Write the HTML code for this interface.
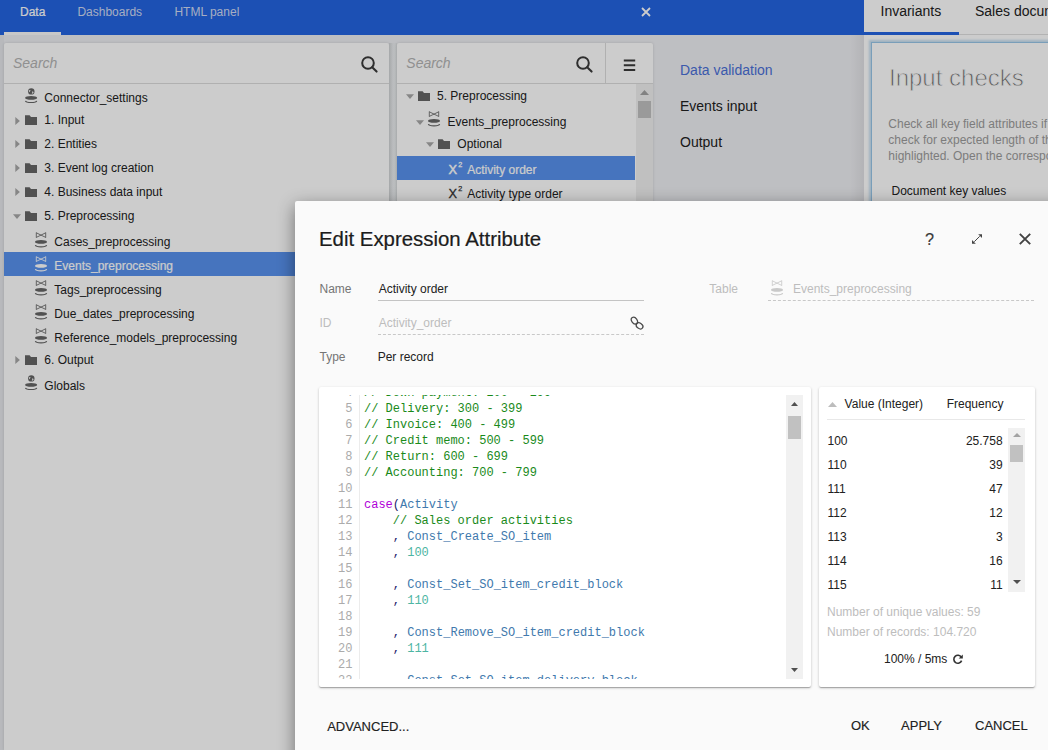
<!DOCTYPE html>
<html><head><meta charset="utf-8">
<style>
*{box-sizing:border-box;margin:0;padding:0}
html,body{width:1048px;height:750px;overflow:hidden}
body{position:relative;background:#eeeff3;font-family:"Liberation Sans",sans-serif;color:#212121;font-size:12px}
.a{position:absolute}
.t{position:absolute;white-space:pre}
svg{position:absolute;overflow:visible}
.code{font-family:"Liberation Mono",monospace;font-size:12px;line-height:16px;white-space:pre}
</style></head><body>

<div class="a" style="left:0px;top:0px;width:864px;height:35px;background:#2464e1;"></div>
<div class="t" style="left:20px;top:-0.17px;line-height:24px;height:24px;font-size:12px;color:#ffffff;-webkit-text-stroke:0.2px #fff">Data</div>
<div class="t" style="left:77.4px;top:-0.17px;line-height:24px;height:24px;font-size:12px;color:#d0daf3;">Dashboards</div>
<div class="t" style="left:174.4px;top:-0.17px;line-height:24px;height:24px;font-size:12px;color:#d0daf3;">HTML panel</div>
<div class="a" style="left:4px;top:32px;width:57px;height:3px;background:#fafafa;"></div>
<svg style="left:641px;top:7px" width="10" height="10" viewBox="0 0 10 10"><path d="M1 1L9 9M9 1L1 9" stroke="#fff" stroke-width="1.8"/></svg>
<div class="a" style="left:0px;top:35px;width:4px;height:715px;background:#e6e8ec;"></div>
<div class="a" style="left:4px;top:43px;width:385px;height:707px;background:#fff;border-radius:2px 2px 0 0;box-shadow:0 0 3px rgba(0,0,0,0.14)"></div>
<div class="a" style="left:389px;top:43px;width:8px;height:707px;background:linear-gradient(90deg,#d0d2d4 0px,#dcdfe1 2px,#e9ecee 4px,#eaedef 6px,#e0e3e5 8px);"></div>
<div class="a" style="left:4px;top:83px;width:385px;height:1px;background:#dcdcdc;"></div>
<div class="t" style="left:13px;top:51.09px;line-height:24px;height:24px;font-size:14px;color:#b4b4b4;font-style:italic">Search</div>
<svg style="left:361px;top:56px" width="17" height="17" viewBox="0 0 17 17"><circle cx="7" cy="7" r="5.8" stroke="#3a3a3a" stroke-width="2" fill="none"/><path d="M11.2 11.2L15.6 15.6" stroke="#3a3a3a" stroke-width="2.1" stroke-linecap="round"/></svg>
<div class="a" style="left:4px;top:252px;width:385px;height:24px;background:#5892ee;"></div>
<svg style="left:24.8px;top:87.6px" width="13" height="15" viewBox="0 0 13 15"><circle cx="6.3" cy="3.4" r="3.2" fill="#666666"/><path d="M4.2 2.2Q5.2 1.6 5.6 2.6Q5 3.6 4 4.2Q3.9 3 4.2 2.2ZM7.2 3.2Q8.6 3.4 8.6 4.4Q7.8 5.6 6.8 5.8Q7.4 4.6 7.2 3.2Z" fill="#fff"/><ellipse cx="6.1" cy="9.9" rx="6" ry="1.9" fill="#666666"/><path d="M0.5 12.8Q0.9 14.5 6.1 14.5Q11.3 14.5 11.7 12.8" stroke="#666666" stroke-width="1.2" fill="none"/></svg>
<div class="t" style="left:44.3px;top:85.93px;line-height:24px;height:24px;font-size:12px;color:#212121;">Connector_settings</div>
<svg style="left:14.5px;top:116.7px" width="5" height="8" viewBox="0 0 5 8"><path d="M0.3 0L4.9 4L0.3 8Z" fill="#a8a8a8"/></svg>
<svg style="left:25px;top:115.30000000000001px" width="12" height="10" viewBox="0 0 12 10"><path d="M0 0.3H4.6L6 2H12V10H0Z" fill="#666666"/></svg>
<div class="t" style="left:44.3px;top:108.23px;line-height:24px;height:24px;font-size:12px;color:#212121;">1. Input</div>
<svg style="left:14.5px;top:140.3px" width="5" height="8" viewBox="0 0 5 8"><path d="M0.3 0L4.9 4L0.3 8Z" fill="#a8a8a8"/></svg>
<svg style="left:25px;top:138.9px" width="12" height="10" viewBox="0 0 12 10"><path d="M0 0.3H4.6L6 2H12V10H0Z" fill="#666666"/></svg>
<div class="t" style="left:44.3px;top:131.83px;line-height:24px;height:24px;font-size:12px;color:#212121;">2. Entities</div>
<svg style="left:14.5px;top:164.20000000000002px" width="5" height="8" viewBox="0 0 5 8"><path d="M0.3 0L4.9 4L0.3 8Z" fill="#a8a8a8"/></svg>
<svg style="left:25px;top:162.8px" width="12" height="10" viewBox="0 0 12 10"><path d="M0 0.3H4.6L6 2H12V10H0Z" fill="#666666"/></svg>
<div class="t" style="left:44.3px;top:155.73px;line-height:24px;height:24px;font-size:12px;color:#212121;">3. Event log creation</div>
<svg style="left:14.5px;top:188.3px" width="5" height="8" viewBox="0 0 5 8"><path d="M0.3 0L4.9 4L0.3 8Z" fill="#a8a8a8"/></svg>
<svg style="left:25px;top:186.9px" width="12" height="10" viewBox="0 0 12 10"><path d="M0 0.3H4.6L6 2H12V10H0Z" fill="#666666"/></svg>
<div class="t" style="left:44.3px;top:179.83px;line-height:24px;height:24px;font-size:12px;color:#212121;">4. Business data input</div>
<svg style="left:12.8px;top:213.9px" width="8" height="5" viewBox="0 0 8 5"><path d="M0 0.3H8L4 5Z" fill="#a8a8a8"/></svg>
<svg style="left:25px;top:210.8px" width="12" height="10" viewBox="0 0 12 10"><path d="M0 0.3H4.6L6 2H12V10H0Z" fill="#666666"/></svg>
<div class="t" style="left:44.3px;top:203.73px;line-height:24px;height:24px;font-size:12px;color:#212121;">5. Preprocessing</div>
<svg style="left:35px;top:232.0px" width="12" height="15" viewBox="0 0 12 15"><path d="M1.3 0.5V5.7M10.7 0.5V5.7M1.3 0.8L10.7 5.4M1.3 5.4L10.7 0.8" stroke="#666666" stroke-width="0.85" fill="none"/><ellipse cx="6" cy="9.9" rx="6" ry="1.9" fill="#666666"/><path d="M0.4 13.2Q0.8 14.9 6 14.9Q11.2 14.9 11.6 13.2" stroke="#666666" stroke-width="1.2" fill="none"/></svg>
<div class="t" style="left:54.3px;top:229.63px;line-height:24px;height:24px;font-size:12px;color:#212121;">Cases_preprocessing</div>
<svg style="left:35px;top:256.0px" width="12" height="15" viewBox="0 0 12 15"><path d="M1.3 0.5V5.7M10.7 0.5V5.7M1.3 0.8L10.7 5.4M1.3 5.4L10.7 0.8" stroke="#ffffff" stroke-width="0.85" fill="none"/><ellipse cx="6" cy="9.9" rx="6" ry="1.9" fill="#ffffff"/><path d="M0.4 13.2Q0.8 14.9 6 14.9Q11.2 14.9 11.6 13.2" stroke="#ffffff" stroke-width="1.2" fill="none"/></svg>
<div class="t" style="left:54.3px;top:253.63px;line-height:24px;height:24px;font-size:12px;color:#ffffff;-webkit-text-stroke:0.2px #fff">Events_preprocessing</div>
<svg style="left:35px;top:280.0px" width="12" height="15" viewBox="0 0 12 15"><path d="M1.3 0.5V5.7M10.7 0.5V5.7M1.3 0.8L10.7 5.4M1.3 5.4L10.7 0.8" stroke="#666666" stroke-width="0.85" fill="none"/><ellipse cx="6" cy="9.9" rx="6" ry="1.9" fill="#666666"/><path d="M0.4 13.2Q0.8 14.9 6 14.9Q11.2 14.9 11.6 13.2" stroke="#666666" stroke-width="1.2" fill="none"/></svg>
<div class="t" style="left:54.3px;top:277.63px;line-height:24px;height:24px;font-size:12px;color:#212121;">Tags_preprocessing</div>
<svg style="left:35px;top:304.0px" width="12" height="15" viewBox="0 0 12 15"><path d="M1.3 0.5V5.7M10.7 0.5V5.7M1.3 0.8L10.7 5.4M1.3 5.4L10.7 0.8" stroke="#666666" stroke-width="0.85" fill="none"/><ellipse cx="6" cy="9.9" rx="6" ry="1.9" fill="#666666"/><path d="M0.4 13.2Q0.8 14.9 6 14.9Q11.2 14.9 11.6 13.2" stroke="#666666" stroke-width="1.2" fill="none"/></svg>
<div class="t" style="left:54.3px;top:301.63px;line-height:24px;height:24px;font-size:12px;color:#212121;">Due_dates_preprocessing</div>
<svg style="left:35px;top:328.2px" width="12" height="15" viewBox="0 0 12 15"><path d="M1.3 0.5V5.7M10.7 0.5V5.7M1.3 0.8L10.7 5.4M1.3 5.4L10.7 0.8" stroke="#666666" stroke-width="0.85" fill="none"/><ellipse cx="6" cy="9.9" rx="6" ry="1.9" fill="#666666"/><path d="M0.4 13.2Q0.8 14.9 6 14.9Q11.2 14.9 11.6 13.2" stroke="#666666" stroke-width="1.2" fill="none"/></svg>
<div class="t" style="left:54.3px;top:325.83px;line-height:24px;height:24px;font-size:12px;color:#212121;">Reference_models_preprocessing</div>
<svg style="left:14.5px;top:356.2px" width="5" height="8" viewBox="0 0 5 8"><path d="M0.3 0L4.9 4L0.3 8Z" fill="#a8a8a8"/></svg>
<svg style="left:25px;top:354.79999999999995px" width="12" height="10" viewBox="0 0 12 10"><path d="M0 0.3H4.6L6 2H12V10H0Z" fill="#666666"/></svg>
<div class="t" style="left:44.3px;top:347.73px;line-height:24px;height:24px;font-size:12px;color:#212121;">6. Output</div>
<svg style="left:24.8px;top:375.3px" width="13" height="15" viewBox="0 0 13 15"><circle cx="6.3" cy="3.4" r="3.2" fill="#666666"/><path d="M4.2 2.2Q5.2 1.6 5.6 2.6Q5 3.6 4 4.2Q3.9 3 4.2 2.2ZM7.2 3.2Q8.6 3.4 8.6 4.4Q7.8 5.6 6.8 5.8Q7.4 4.6 7.2 3.2Z" fill="#fff"/><ellipse cx="6.1" cy="9.9" rx="6" ry="1.9" fill="#666666"/><path d="M0.5 12.8Q0.9 14.5 6.1 14.5Q11.3 14.5 11.7 12.8" stroke="#666666" stroke-width="1.2" fill="none"/></svg>
<div class="t" style="left:44.3px;top:373.63px;line-height:24px;height:24px;font-size:12px;color:#212121;">Globals</div>
<div class="a" style="left:397px;top:43px;width:256px;height:707px;background:#fff;border-radius:2px 2px 0 0;box-shadow:0 0 3px rgba(0,0,0,0.14)"></div>
<div class="a" style="left:397px;top:83px;width:256px;height:1px;background:#dcdcdc;"></div>
<div class="a" style="left:605px;top:43px;width:1px;height:40px;background:#dcdcdc;"></div>
<div class="t" style="left:406.3px;top:51.09px;line-height:24px;height:24px;font-size:14px;color:#b4b4b4;font-style:italic">Search</div>
<svg style="left:576px;top:56px" width="17" height="17" viewBox="0 0 17 17"><circle cx="7" cy="7" r="5.8" stroke="#3a3a3a" stroke-width="2" fill="none"/><path d="M11.2 11.2L15.6 15.6" stroke="#3a3a3a" stroke-width="2.1" stroke-linecap="round"/></svg>
<svg style="left:623px;top:59px" width="13" height="13" viewBox="0 0 13 13"><path d="M0.8 1.6H12.2M0.8 6.3H12.2M0.8 11H12.2" stroke="#3a3a3a" stroke-width="2"/></svg>
<div class="a" style="left:636px;top:84px;width:17px;height:666px;background:#f1f1f1;"></div>
<svg style="left:640px;top:90px" width="9" height="5" viewBox="0 0 9 5"><path d="M0 5L4.5 0L9 5Z" fill="#a3a3a3"/></svg>
<div class="a" style="left:638px;top:101px;width:13px;height:17px;background:#c1c1c1;"></div>
<svg style="left:406px;top:93.5px" width="8" height="5" viewBox="0 0 8 5"><path d="M0 0.3H8L4 5Z" fill="#a8a8a8"/></svg>
<svg style="left:418px;top:91.3px" width="12" height="10" viewBox="0 0 12 10"><path d="M0 0.3H4.6L6 2H12V10H0Z" fill="#666666"/></svg>
<div class="t" style="left:437px;top:84.33px;line-height:24px;height:24px;font-size:12px;color:#212121;">5. Preprocessing</div>
<svg style="left:416px;top:119.5px" width="8" height="5" viewBox="0 0 8 5"><path d="M0 0.3H8L4 5Z" fill="#a8a8a8"/></svg>
<svg style="left:428px;top:111.3px" width="12" height="15" viewBox="0 0 12 15"><path d="M1.3 0.5V5.7M10.7 0.5V5.7M1.3 0.8L10.7 5.4M1.3 5.4L10.7 0.8" stroke="#666666" stroke-width="0.85" fill="none"/><ellipse cx="6" cy="9.9" rx="6" ry="1.9" fill="#666666"/><path d="M0.4 13.2Q0.8 14.9 6 14.9Q11.2 14.9 11.6 13.2" stroke="#666666" stroke-width="1.2" fill="none"/></svg>
<div class="t" style="left:447.6px;top:110.03px;line-height:24px;height:24px;font-size:12px;color:#212121;">Events_preprocessing</div>
<svg style="left:426px;top:141.5px" width="8" height="5" viewBox="0 0 8 5"><path d="M0 0.3H8L4 5Z" fill="#a8a8a8"/></svg>
<svg style="left:438px;top:139px" width="12" height="10" viewBox="0 0 12 10"><path d="M0 0.3H4.6L6 2H12V10H0Z" fill="#666666"/></svg>
<div class="t" style="left:457.3px;top:132.03px;line-height:24px;height:24px;font-size:12px;color:#212121;">Optional</div>
<div class="a" style="left:397px;top:156px;width:238px;height:24px;background:#5892ee;"></div>
<div class="t" style="left:448.6px;top:158.25px;line-height:24px;height:24px;font-size:12.8px;color:#ffffff;-webkit-text-stroke:0.45px #fff">X</div>
<div class="t" style="left:458.2px;top:153.40px;line-height:24px;height:24px;font-size:7.2px;color:#ffffff;-webkit-text-stroke:0.3px #fff">2</div>
<div class="t" style="left:467.2px;top:158.13px;line-height:24px;height:24px;font-size:12px;color:#ffffff;-webkit-text-stroke:0.2px #fff">Activity order</div>
<div class="t" style="left:448.6px;top:182.15px;line-height:24px;height:24px;font-size:12.8px;color:#333;-webkit-text-stroke:0.3px #333">X</div>
<div class="t" style="left:458.2px;top:177.30px;line-height:24px;height:24px;font-size:7.2px;color:#333;-webkit-text-stroke:0.25px #333">2</div>
<div class="t" style="left:467.2px;top:182.03px;line-height:24px;height:24px;font-size:12px;color:#212121;">Activity type order</div>
<div class="t" style="left:680px;top:57.98px;line-height:24px;height:24px;font-size:14px;color:#4a70d8;">Data validation</div>
<div class="t" style="left:680px;top:93.98px;line-height:24px;height:24px;font-size:14px;color:#212121;">Events input</div>
<div class="t" style="left:680px;top:130.19px;line-height:24px;height:24px;font-size:14px;color:#212121;">Output</div>
<div class="a" style="left:850px;top:35px;width:14px;height:715px;background:linear-gradient(90deg,rgba(0,0,0,0) 0%,rgba(0,0,0,0.06) 100%);"></div>
<div class="a" style="left:864px;top:0px;width:184px;height:750px;background:#fff;"></div>
<div class="t" style="left:880.5px;top:-0.87px;line-height:24px;height:24px;font-size:14px;color:#212121;">Invariants</div>
<div class="t" style="left:975px;top:-0.87px;line-height:24px;height:24px;font-size:14px;color:#212121;">Sales documents</div>
<div class="a" style="left:864px;top:32px;width:95px;height:3px;background:#2464e1;"></div>
<div class="a" style="left:959px;top:34px;width:89px;height:1px;background:#e0e0e0;"></div>
<div class="a" style="left:871px;top:42px;width:200px;height:720px;background:#fff;border:1px solid #98c6e8;box-shadow:0 0 2px 2px rgba(130,185,225,0.45)"></div>
<div class="t" style="left:889px;top:66.06px;line-height:24px;height:24px;font-size:24px;color:#6e6e6e;-webkit-text-stroke:0.8px #ffffff">Input checks</div>
<div class="t" style="left:888.3px;top:111.83px;line-height:24px;height:24px;font-size:12px;color:#9c9c9c;">Check all key field attributes if their values</div>
<div class="t" style="left:888.3px;top:127.83px;line-height:24px;height:24px;font-size:12px;color:#9c9c9c;">check for expected length of the key values</div>
<div class="t" style="left:888.3px;top:143.83px;line-height:24px;height:24px;font-size:12px;color:#9c9c9c;">highlighted. Open the corresponding sheet</div>
<div class="t" style="left:891.5px;top:178.93px;line-height:24px;height:24px;font-size:12px;color:#212121;">Document key values</div>
<div class="a" style="left:0;top:0;width:1048px;height:750px;background:rgba(0,0,0,0.2)"></div>
<div class="a" style="left:295px;top:201px;width:800px;height:600px;background:#fafafa;border-radius:2px;box-shadow:0 5px 17px rgba(0,0,0,.45)"></div>
<div class="t" style="left:319px;top:227.16px;line-height:24px;height:24px;font-size:20.4px;color:#1c1c1c;-webkit-text-stroke:0.22px #1c1c1c">Edit Expression Attribute</div>
<div class="t" style="left:925px;top:226.75px;line-height:24px;height:24px;font-size:16.3px;color:#3a3a3a;-webkit-text-stroke:0.15px #3a3a3a">?</div>
<svg style="left:971px;top:233px" width="12" height="12" viewBox="0 0 12 12"><path d="M3.3 8.7L8.7 3.3" stroke="#444" stroke-width="1"/><path d="M7.2 1.2H11V5Z" fill="#444"/><path d="M1 7V10.8H4.8Z" fill="#444"/></svg>
<svg style="left:1019px;top:232.5px" width="12" height="12" viewBox="0 0 12 12"><path d="M0.8 0.8L11.2 11.2M11.2 0.8L0.8 11.2" stroke="#424242" stroke-width="1.9"/></svg>
<div class="t" style="left:319.5px;top:277.03px;line-height:24px;height:24px;font-size:12px;color:#757575;">Name</div>
<div class="t" style="left:378.7px;top:277.03px;line-height:24px;height:24px;font-size:12px;color:#212121;">Activity order</div>
<div class="a" style="left:378px;top:300px;width:266px;height:1px;background:#c4c4c4;"></div>
<div class="t" style="left:319.5px;top:310.93px;line-height:24px;height:24px;font-size:12px;color:#bdbdbd;">ID</div>
<div class="t" style="left:378.7px;top:310.93px;line-height:24px;height:24px;font-size:12px;color:#bdbdbd;">Activity_order</div>
<div class="a" style="left:378px;top:334px;width:266px;height:0;border-top:1px dashed #c8c8c8"></div>
<svg style="left:631px;top:317px" width="12" height="12" viewBox="0 0 12 12"><g stroke="#4a4a4a" stroke-width="1.25" fill="none"><ellipse cx="3.4" cy="3.6" rx="3.7" ry="2.7" transform="rotate(55 3.4 3.6)"/><ellipse cx="8.6" cy="8.9" rx="3.6" ry="2.7" transform="rotate(35 8.6 8.9)"/></g></svg>
<div class="t" style="left:319.5px;top:344.83px;line-height:24px;height:24px;font-size:12px;color:#757575;">Type</div>
<div class="t" style="left:377.7px;top:344.83px;line-height:24px;height:24px;font-size:12px;color:#212121;">Per record</div>
<div class="t" style="left:709.3px;top:277.03px;line-height:24px;height:24px;font-size:12px;color:#bdbdbd;">Table</div>
<svg style="left:771px;top:279.5px" width="12" height="15" viewBox="0 0 12 15"><path d="M1.3 0.5V5.7M10.7 0.5V5.7M1.3 0.8L10.7 5.4M1.3 5.4L10.7 0.8" stroke="#c9c9c9" stroke-width="0.85" fill="none"/><ellipse cx="6" cy="9.9" rx="6" ry="1.9" fill="#c9c9c9"/><path d="M0.4 13.2Q0.8 14.9 6 14.9Q11.2 14.9 11.6 13.2" stroke="#c9c9c9" stroke-width="1.2" fill="none"/></svg>
<div class="t" style="left:793px;top:277.03px;line-height:24px;height:24px;font-size:12px;color:#bdbdbd;">Events_preprocessing</div>
<div class="a" style="left:768px;top:300px;width:266px;height:0;border-top:1px dashed #c8c8c8"></div>
<div class="a" style="left:319px;top:387px;width:492px;height:300px;background:#fff;border-radius:2px;box-shadow:0 1px 3px rgba(0,0,0,.2),0 1px 1px rgba(0,0,0,.14),0 2px 1px -1px rgba(0,0,0,.12)"></div>
<div class="a" style="left:359px;top:395px;width:1px;height:284px;background:#ececec;"></div>
<div class="a" style="left:319px;top:395px;width:467px;height:284px;overflow:hidden">
<div class="a code" style="left:0;top:-9.90px;width:33.5px;text-align:right;color:#ababab">4</div>
<div class="a code" style="left:45px;top:-9.90px"><span style="color:#1a8a1a">// Down payment: 200 - 299</span></div>
<div class="a code" style="left:0;top:6.10px;width:33.5px;text-align:right;color:#ababab">5</div>
<div class="a code" style="left:45px;top:6.10px"><span style="color:#1a8a1a">// Delivery: 300 - 399</span></div>
<div class="a code" style="left:0;top:22.10px;width:33.5px;text-align:right;color:#ababab">6</div>
<div class="a code" style="left:45px;top:22.10px"><span style="color:#1a8a1a">// Invoice: 400 - 499</span></div>
<div class="a code" style="left:0;top:38.10px;width:33.5px;text-align:right;color:#ababab">7</div>
<div class="a code" style="left:45px;top:38.10px"><span style="color:#1a8a1a">// Credit memo: 500 - 599</span></div>
<div class="a code" style="left:0;top:54.10px;width:33.5px;text-align:right;color:#ababab">8</div>
<div class="a code" style="left:45px;top:54.10px"><span style="color:#1a8a1a">// Return: 600 - 699</span></div>
<div class="a code" style="left:0;top:70.10px;width:33.5px;text-align:right;color:#ababab">9</div>
<div class="a code" style="left:45px;top:70.10px"><span style="color:#1a8a1a">// Accounting: 700 - 799</span></div>
<div class="a code" style="left:0;top:86.10px;width:33.5px;text-align:right;color:#ababab">10</div>
<div class="a code" style="left:45px;top:86.10px"></div>
<div class="a code" style="left:0;top:102.10px;width:33.5px;text-align:right;color:#ababab">11</div>
<div class="a code" style="left:45px;top:102.10px"><span style="color:#b000d8">case</span><span style="color:#1a1a6a">(</span><span style="color:#4179ad">Activity</span></div>
<div class="a code" style="left:0;top:118.10px;width:33.5px;text-align:right;color:#ababab">12</div>
<div class="a code" style="left:45px;top:118.10px"><span style="color:#1a8a1a">    // Sales order activities</span></div>
<div class="a code" style="left:0;top:134.10px;width:33.5px;text-align:right;color:#ababab">13</div>
<div class="a code" style="left:45px;top:134.10px"><span style="color:#1a1a6a">    , </span><span style="color:#4179ad">Const_Create_SO_item</span></div>
<div class="a code" style="left:0;top:150.10px;width:33.5px;text-align:right;color:#ababab">14</div>
<div class="a code" style="left:45px;top:150.10px"><span style="color:#1a1a6a">    , </span><span style="color:#4db5a3">100</span></div>
<div class="a code" style="left:0;top:166.10px;width:33.5px;text-align:right;color:#ababab">15</div>
<div class="a code" style="left:45px;top:166.10px"></div>
<div class="a code" style="left:0;top:182.10px;width:33.5px;text-align:right;color:#ababab">16</div>
<div class="a code" style="left:45px;top:182.10px"><span style="color:#1a1a6a">    , </span><span style="color:#4179ad">Const_Set_SO_item_credit_block</span></div>
<div class="a code" style="left:0;top:198.10px;width:33.5px;text-align:right;color:#ababab">17</div>
<div class="a code" style="left:45px;top:198.10px"><span style="color:#1a1a6a">    , </span><span style="color:#4db5a3">110</span></div>
<div class="a code" style="left:0;top:214.10px;width:33.5px;text-align:right;color:#ababab">18</div>
<div class="a code" style="left:45px;top:214.10px"></div>
<div class="a code" style="left:0;top:230.10px;width:33.5px;text-align:right;color:#ababab">19</div>
<div class="a code" style="left:45px;top:230.10px"><span style="color:#1a1a6a">    , </span><span style="color:#4179ad">Const_Remove_SO_item_credit_block</span></div>
<div class="a code" style="left:0;top:246.10px;width:33.5px;text-align:right;color:#ababab">20</div>
<div class="a code" style="left:45px;top:246.10px"><span style="color:#1a1a6a">    , </span><span style="color:#4db5a3">111</span></div>
<div class="a code" style="left:0;top:262.10px;width:33.5px;text-align:right;color:#ababab">21</div>
<div class="a code" style="left:45px;top:262.10px"></div>
<div class="a code" style="left:0;top:278.10px;width:33.5px;text-align:right;color:#ababab">22</div>
<div class="a code" style="left:45px;top:278.10px"><span style="color:#1a1a6a">    , </span><span style="color:#4179ad">Const_Set_SO_item_delivery_block</span></div>
</div>
<div class="a" style="left:786px;top:395px;width:17px;height:284px;background:#f1f1f1;"></div>
<svg style="left:791px;top:402px" width="7" height="4" viewBox="0 0 7 4"><path d="M0 4L3.5 0L7 4Z" fill="#505050"/></svg>
<div class="a" style="left:788px;top:416px;width:13px;height:23px;background:#c1c1c1;"></div>
<svg style="left:791px;top:668px" width="7" height="4" viewBox="0 0 7 4"><path d="M0 0L3.5 4L7 0Z" fill="#505050"/></svg>
<div class="a" style="left:819px;top:387px;width:216px;height:300px;background:#fff;border-radius:2px;box-shadow:0 1px 3px rgba(0,0,0,.2),0 1px 1px rgba(0,0,0,.14),0 2px 1px -1px rgba(0,0,0,.12)"></div>
<svg style="left:827.5px;top:402px" width="9" height="5" viewBox="0 0 9 5"><path d="M0 5L4.5 0L9 5Z" fill="#bdbdbd"/></svg>
<div class="t" style="left:844.6px;top:391.93px;line-height:24px;height:24px;font-size:12px;color:#212121;">Value (Integer)</div>
<div class="t" style="left:946.7px;top:391.93px;line-height:24px;height:24px;font-size:12px;color:#212121;">Frequency</div>
<div class="a" style="left:827px;top:419px;width:198px;height:1px;background:#e8e8e8;"></div>
<div class="t" style="left:827.5px;top:428.83px;line-height:24px;height:24px;font-size:12px;color:#212121;">100</div>
<div class="t" style="left:900px;width:102.6px;text-align:right;top:428.60px;line-height:24px;height:24px;font-size:12px;color:#212121">25.758</div>
<div class="t" style="left:827.5px;top:452.83px;line-height:24px;height:24px;font-size:12px;color:#212121;">110</div>
<div class="t" style="left:900px;width:102.6px;text-align:right;top:452.60px;line-height:24px;height:24px;font-size:12px;color:#212121">39</div>
<div class="t" style="left:827.5px;top:476.83px;line-height:24px;height:24px;font-size:12px;color:#212121;">111</div>
<div class="t" style="left:900px;width:102.6px;text-align:right;top:476.60px;line-height:24px;height:24px;font-size:12px;color:#212121">47</div>
<div class="t" style="left:827.5px;top:500.83px;line-height:24px;height:24px;font-size:12px;color:#212121;">112</div>
<div class="t" style="left:900px;width:102.6px;text-align:right;top:500.60px;line-height:24px;height:24px;font-size:12px;color:#212121">12</div>
<div class="t" style="left:827.5px;top:524.83px;line-height:24px;height:24px;font-size:12px;color:#212121;">113</div>
<div class="t" style="left:900px;width:102.6px;text-align:right;top:524.60px;line-height:24px;height:24px;font-size:12px;color:#212121">3</div>
<div class="t" style="left:827.5px;top:548.83px;line-height:24px;height:24px;font-size:12px;color:#212121;">114</div>
<div class="t" style="left:900px;width:102.6px;text-align:right;top:548.60px;line-height:24px;height:24px;font-size:12px;color:#212121">16</div>
<div class="t" style="left:827.5px;top:572.83px;line-height:24px;height:24px;font-size:12px;color:#212121;">115</div>
<div class="t" style="left:900px;width:102.6px;text-align:right;top:572.60px;line-height:24px;height:24px;font-size:12px;color:#212121">11</div>
<div class="a" style="left:1008px;top:428px;width:17px;height:164px;background:#f1f1f1;"></div>
<svg style="left:1013px;top:433px" width="8" height="4" viewBox="0 0 8 4"><path d="M0 4L4 0L8 4Z" fill="#a3a3a3"/></svg>
<div class="a" style="left:1010px;top:445px;width:13px;height:17px;background:#c1c1c1;"></div>
<svg style="left:1013px;top:580px" width="8" height="4" viewBox="0 0 8 4"><path d="M0 0L4 4L8 0Z" fill="#505050"/></svg>
<div class="t" style="left:827px;top:599.93px;line-height:24px;height:24px;font-size:12px;color:#bdbdbd;">Number of unique values: 59</div>
<div class="t" style="left:827px;top:619.63px;line-height:24px;height:24px;font-size:12px;color:#bdbdbd;">Number of records: 104.720</div>
<div class="t" style="left:884px;top:647.03px;line-height:24px;height:24px;font-size:12px;color:#212121;">100% / 5ms</div>
<svg style="left:952.5px;top:654px" width="10" height="10" viewBox="0 0 10 10"><path d="M8.3 3.2A4 4 0 1 0 8.6 6.6" stroke="#333" stroke-width="1.6" fill="none"/><path d="M9.8 0.5V4.6H5.7Z" fill="#333"/></svg>
<div class="t" style="left:327.2px;top:714.66px;line-height:24px;height:24px;font-size:13px;color:#212121;-webkit-text-stroke:0.15px #212121">ADVANCED...</div>
<div class="t" style="left:851px;top:714.46px;line-height:24px;height:24px;font-size:13px;color:#212121;-webkit-text-stroke:0.15px #212121">OK</div>
<div class="t" style="left:901.1px;top:714.46px;line-height:24px;height:24px;font-size:13px;color:#212121;-webkit-text-stroke:0.15px #212121">APPLY</div>
<div class="t" style="left:975px;top:714.46px;line-height:24px;height:24px;font-size:13px;color:#212121;-webkit-text-stroke:0.15px #212121">CANCEL</div>
</body></html>
